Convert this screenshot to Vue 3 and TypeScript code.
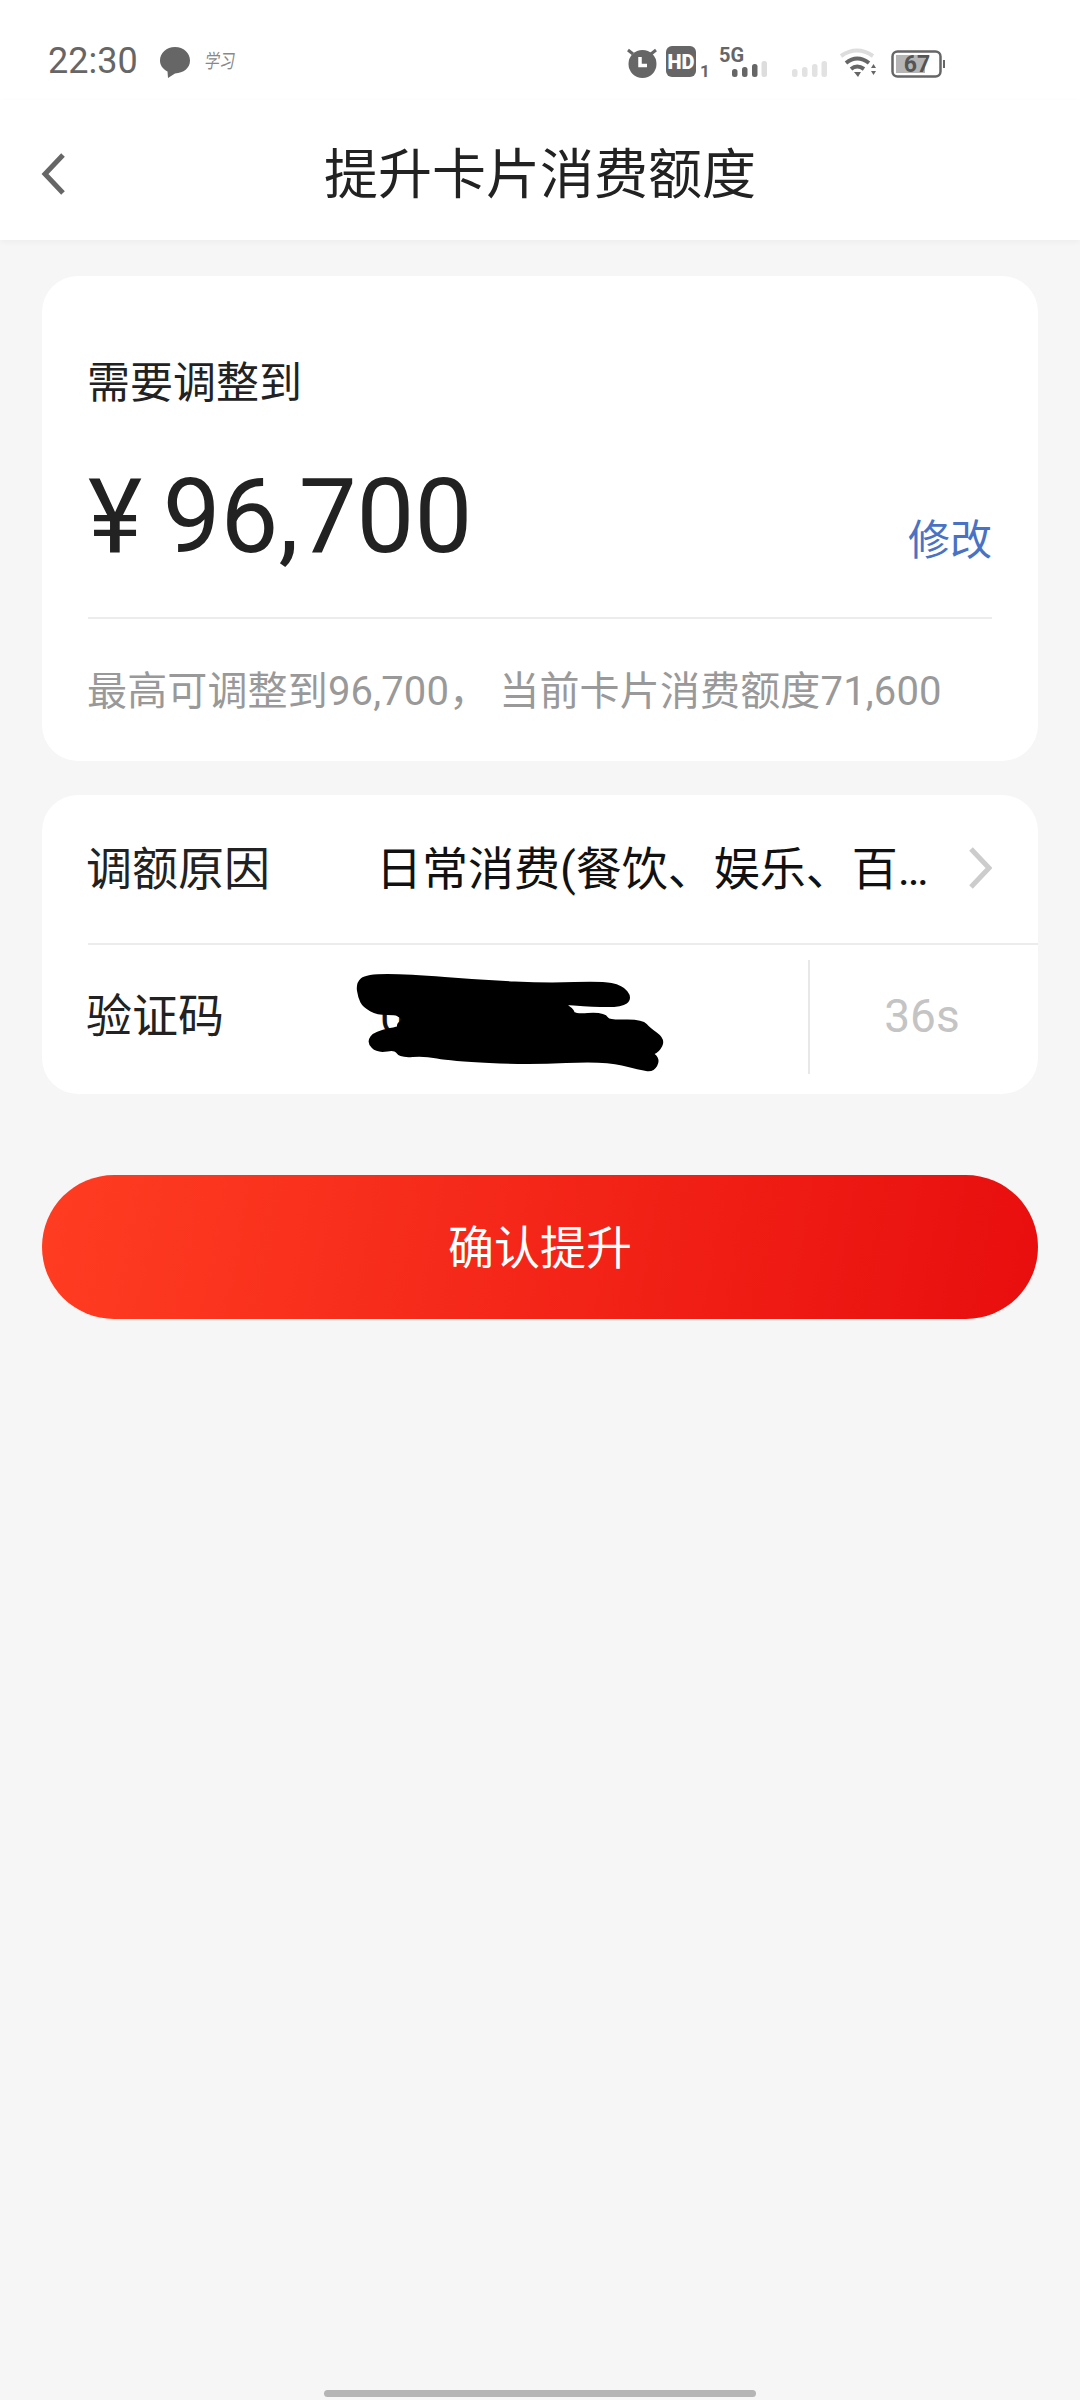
<template>
  <div class="page">
    <!-- Status bar -->
    <div class="status-bar">
      <span class="time">22:30</span>
      <svg class="bubble" width="32" height="34" viewBox="0 0 32 34">
        <path d="M16 2C24.500 2 31 8 31 15.500C31 23 24.500 28 16 28.500L9 33L8.500 26.500C3.500 24 1 20 1 15.500C1 8 7.500 2 16 2Z" fill="#666" />
      </svg>
      <span class="sig">学习</span>
      <svg class="status-icons" width="340" height="50" viewBox="0 0 340 50">
        <!-- alarm -->
        <path d="M8 14L13 18M36 14L31 18" stroke="#666" stroke-width="3" fill="none" />
        <circle cx="22.500" cy="28" r="14" fill="#666" />
        <path d="M20 21V29.500H27" stroke="#fff" stroke-width="3.500" fill="none" />
        <!-- HD -->
        <rect x="46" y="10" width="30" height="31" rx="6" fill="#666" />
        <text x="61" y="33" class="hd">HD</text>
        <text x="80" y="41" class="sim">1</text>
        <!-- 5G signal -->
        <text x="99" y="26" class="net">5G</text>
        <rect v-for="bar in signalOne" :key="bar.x" :x="bar.x" :y="bar.y" width="5.500" :height="41 - bar.y" rx="2.500" :fill="bar.on ? '#666' : '#ddd'" />
        <!-- second sim -->
        <rect v-for="bar in signalTwo" :key="bar.x" :x="bar.x" :y="bar.y" width="5.500" :height="41 - bar.y" rx="2.500" fill="#e2e2e2" />
        <!-- wifi -->
        <path d="M221 20Q237 9 253 20" stroke="#ddd" stroke-width="4" fill="none" />
        <path d="M226 27Q237 18 249 27" stroke="#666" stroke-width="4" fill="none" />
        <path d="M231 33Q237 28 244 33" stroke="#666" stroke-width="4" fill="none" />
        <path d="M234 36H241L238 41Z" fill="#666" />
        <path d="M251 32H256L253.500 28ZM251 35H256L253.500 39Z" fill="#666" />
        <!-- battery -->
        <rect x="272.500" y="15.500" width="48" height="25" rx="5" fill="none" stroke="#666" stroke-width="2.500" />
        <rect x="276" y="19" width="29" height="18" fill="#b5b5b5" />
        <rect x="323" y="24" width="2" height="8" fill="#666" />
        <text x="297" y="36" class="batt">67</text>
      </svg>
    </div>

    <!-- Nav -->
    <header class="nav">
      <svg class="back" width="26" height="44" viewBox="0 0 26 44">
        <path d="M22 3L4 22L22 41" stroke="#666" stroke-width="5" fill="none" />
      </svg>
      <h1 class="title">提升卡片消费额度</h1>
    </header>

    <main class="content">
      <!-- Amount card -->
      <section class="card amount-card">
        <div class="label">需要调整到</div>
        <div class="amount-row">
          <span class="amount">¥ 96,700</span>
          <span class="edit">修改</span>
        </div>
        <div class="hint">最高可调整到96,700， 当前卡片消费额度71,600</div>
      </section>

      <!-- Form card -->
      <section class="card form-card">
        <div class="row reason-row">
          <span class="row-label">调额原因</span>
          <span class="row-value">日常消费(餐饮、娱乐、百…</span>
          <svg class="chevron" width="24" height="42" viewBox="0 0 24 42">
            <path d="M3 2L21 21L3 40" stroke="#ccc" stroke-width="5" fill="none" />
          </svg>
        </div>
        <div class="row code-row">
          <span class="row-label">验证码</span>
          <div class="code-input">
            <span class="row-value">0</span>
            <!-- redaction scribble -->
            <svg class="scribble" width="340" height="120" viewBox="0 0 340 120">
              <path :d="scribblePath" fill="#000" stroke="#000" stroke-width="6" stroke-linejoin="round" />
            </svg>
          </div>
          <span class="timer">36s</span>
        </div>
      </section>

      <button class="confirm-btn">确认提升</button>
    </main>

    <div class="home-bar"></div>
  </div>
</template>

<script setup lang="ts">
const barTops = [
  { x: 112, y: 33 },
  { x: 122, y: 31 },
  { x: 132, y: 28 },
  { x: 141.5, y: 25 }
];

const signalOne = barTops.map((bar, i) => ({ ...bar, on: i < 3 }));
const signalTwo = barTops.map((bar) => ({ x: bar.x + 60, y: bar.y }));

// outline of the marker scribble, smoothed through edge midpoints
const scribblePoints: [number, number][] = [
  [18, 24], [26, 17], [67, 17], [140, 23], [207, 26], [260, 24], [280, 28], [288, 38],
  [280, 44], [253, 44], [213, 41], [230, 50], [232, 57], [262, 55], [267, 63], [300, 62],
  [307, 70], [321, 80], [316, 90], [308, 93], [316, 100], [311, 109], [300, 107], [263, 98],
  [187, 102], [110, 98], [83, 93], [60, 95], [55, 87], [37, 90], [29, 82], [35, 74],
  [64, 68], [57, 66], [66, 60], [60, 55], [55, 52], [37, 52], [24, 45], [20, 37]
];

const scribblePath = scribblePoints
  .map((p, i) => {
    const next = scribblePoints[(i + 1) % scribblePoints.length];
    const mid = `${(p[0] + next[0]) / 2} ${(p[1] + next[1]) / 2}`;
    return i === 0 ? `M${mid}` : `Q${p[0]} ${p[1]} ${mid}`;
  })
  .join(' ') + ` Q${scribblePoints[0][0]} ${scribblePoints[0][1]} ${(scribblePoints[0][0] + scribblePoints[1][0]) / 2} ${(scribblePoints[0][1] + scribblePoints[1][1]) / 2}Z`;
</script>

<style>
body {
  background: #f6f6f6;
}
</style>

<style scoped>
.page {
  position: relative;
  width: 1080px;
  height: 2400px;
  background: #f6f6f6;
  font-family: Roboto, "Noto Sans CJK SC", sans-serif;
  color: #222;
  overflow: hidden;
}

/* Status bar */
.status-bar {
  height: 100px;
  box-sizing: border-box;
  padding: 36px 0 0 48px;
  background: #fff;
  display: flex;
  align-items: flex-start;
}

.time {
  font-size: 36px;
  line-height: 50px;
  color: #666;
}

.bubble {
  margin: 9px 0 0 21px;
}

.sig {
  margin: 15px 0 0 14px;
  font-size: 15px;
  line-height: 20px;
  color: #888;
  transform: scaleY(1.3) skewX(-12deg);
}

.status-icons {
  margin-left: auto;
  margin-right: 120px;
}

.hd {
  font-size: 20px;
  font-weight: 900;
  fill: #fff;
  text-anchor: middle;
}

.sim {
  font-size: 17px;
  font-weight: 700;
  fill: #666;
}

.net {
  font-size: 20px;
  font-weight: 700;
  fill: #666;
}

.batt {
  font-size: 23px;
  font-weight: 700;
  fill: #555;
  text-anchor: middle;
}

/* Nav */
.nav {
  position: relative;
  height: 140px;
  background: #fff;
  display: flex;
  align-items: center;
  justify-content: center;
  box-shadow: 0 2px 6px rgba(0, 0, 0, 0.04);
}

.back {
  position: absolute;
  left: 41px;
  top: 52px;
}

.title {
  margin: 12px 0 0;
  font-size: 54px;
  font-weight: 400;
  line-height: 70px;
}

/* Cards */
.content {
  padding: 36px 42px 0;
}

.card {
  background: #fff;
  border-radius: 36px;
}

.amount-card {
  height: 485px;
  box-sizing: border-box;
  padding: 77px 46px 0;
}

.label {
  margin-left: -1px;
  font-size: 43px;
  line-height: 60px;
}

.amount-row {
  display: flex;
  justify-content: space-between;
  align-items: flex-end;
  margin-top: 44px;
  padding-bottom: 40px;
  border-bottom: 2px solid #ececec;
}

.amount {
  font-size: 103px;
  line-height: 120px;
  word-spacing: -5px;
}

.edit {
  font-size: 42px;
  line-height: 60px;
  margin-bottom: 6px;
  color: #4a72c4;
}

.hint {
  margin: 43px 0 0 -1px;
  font-size: 40px;
  line-height: 60px;
  letter-spacing: 0.15px;
  color: #999;
  white-space: nowrap;
}

.form-card {
  margin-top: 34px;
  height: 299px;
}

.row {
  display: flex;
  align-items: center;
  margin-left: 46px;
}

.reason-row {
  height: 148px;
  border-bottom: 2px solid #ececec;
  padding-right: 46px;
}

.row-label {
  flex: none;
  width: 290px;
  margin-left: -2px;
  font-size: 46px;
  line-height: 60px;
}

.row-value {
  font-size: 46px;
  line-height: 60px;
  color: #111;
}

.reason-row .row-value {
  flex: 1;
  white-space: nowrap;
}

.chevron {
  margin-top: -3px;
}

.code-row {
  height: 149px;
  padding-bottom: 6px;
  box-sizing: border-box;
}

.code-row .row-label {
  margin-top: -2px;
}

.code-input {
  position: relative;
  flex: 1;
  align-self: stretch;
  display: flex;
  align-items: center;
  margin-left: 4px;
}

.scribble {
  position: absolute;
  left: -39px;
  top: 15px;
}

.timer {
  flex: none;
  box-sizing: border-box;
  width: 230px;
  height: 114px;
  padding-right: 4px;
  border-left: 2px solid #e8e8e8;
  font-size: 46px;
  line-height: 112px;
  text-align: center;
  color: #c4c4c4;
}

.confirm-btn {
  display: block;
  width: 100%;
  height: 144px;
  margin-top: 81px;
  padding: 0 0 6px;
  border: none;
  border-radius: 72px;
  background: linear-gradient(100deg, #ff3d22, #e80e0e);
  color: #fff;
  font-family: inherit;
  font-size: 46px;
}

.home-bar {
  position: absolute;
  left: 324px;
  bottom: 3px;
  width: 432px;
  height: 7px;
  border-radius: 4px;
  background: #b5b5b5;
}
</style>
